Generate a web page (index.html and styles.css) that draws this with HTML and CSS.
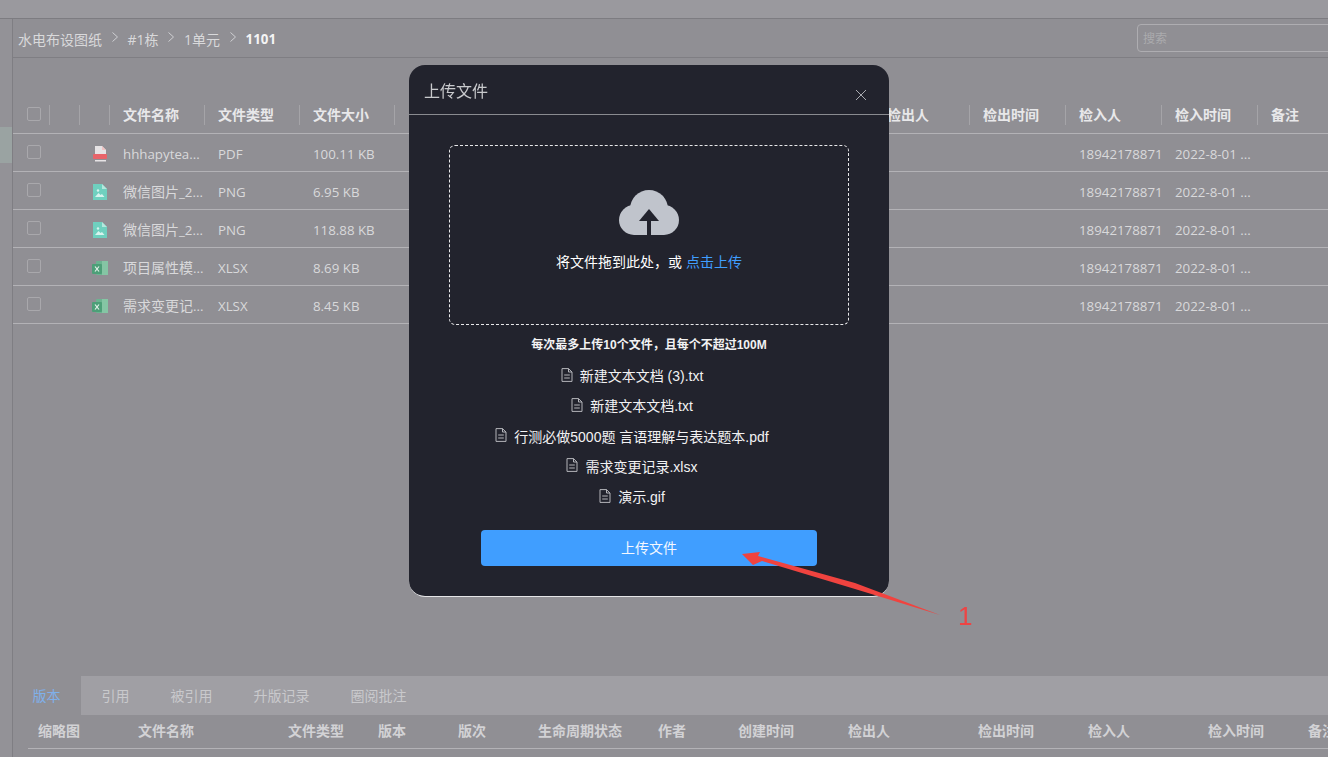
FILE: index.html
```html
<!DOCTYPE html>
<html lang="zh-CN">
<head>
  <meta charset="UTF-8">
  <meta name="viewport" content="width=device-width, initial-scale=1.0">
  <title>上传文件</title>
  <link rel="stylesheet" href="styles.css">
</head>
<body>
  <svg class="defs" width="0" height="0">
    <symbol id="ico-pdf" viewBox="0 0 16 16">
      <path d="M3 0h7l4 4v5H3z" fill="#e6e3e5"/>
      <path d="M10 0l4 4h-4z" fill="#f0c4c4"/>
      <rect x="1" y="8" width="14" height="5" rx="1" fill="#e8646a"/>
      <rect x="3" y="14" width="11" height="1.500" fill="#e6e3e5"/>
    </symbol>
    <symbol id="ico-png" viewBox="0 0 16 16">
      <path d="M1 0h9l5 5v11H1z" fill="#6fd0bf"/>
      <path d="M10 0l5 5h-5z" fill="#b4e8dd"/>
      <path d="M3 13l3.500-4 2 2 1.500-1 2.500 3z" fill="#d8f3ee"/>
      <circle cx="6" cy="6.500" r="1.200" fill="#d8f3ee"/>
    </symbol>
    <symbol id="ico-xls" viewBox="0 0 16 16">
      <rect x="4" y="1" width="12" height="14" rx="1" fill="#6cb391"/>
      <rect x="10" y="1" width="6" height="14" fill="#85c5a4"/>
      <rect x="0" y="4" width="10" height="10" rx="1" fill="#4d9f78"/>
      <path d="M3 6.500l4 5M7 6.500l-4 5" stroke="#e6f3ec" stroke-width="1.200"/>
    </symbol>
    <symbol id="ico-doc" viewBox="0 0 12 14">
      <path d="M1 .6h6.500L11 4v9.400H1zM7.500.6V4H11M3.200 7h5.600M3.200 10h5.600" fill="none" stroke="#b4b5ba" stroke-width="1"/>
    </symbol>
  </svg>

  <div class="page">
    <div class="topbar"></div>
    <div class="content">
      <div class="rail"><div class="rail-active"></div></div>
      <div class="main">
        <div class="crumbs">
          <div class="crumb-path">
            <span>水电布设图纸</span>
            <svg class="chev" viewBox="0 0 6 10"><path d="M.5.500L5.500 5 .5 9.500" fill="none" stroke="#cfcfd2"/></svg>
            <span>#1栋</span>
            <svg class="chev" viewBox="0 0 6 10"><path d="M.5.500L5.500 5 .5 9.500" fill="none" stroke="#cfcfd2"/></svg>
            <span>1单元</span>
            <svg class="chev" viewBox="0 0 6 10"><path d="M.5.500L5.500 5 .5 9.500" fill="none" stroke="#cfcfd2"/></svg>
            <span class="crumb-now">1101</span>
          </div>
          <input class="search" type="text" placeholder="搜索">
        </div>

        <div class="table">
          <div class="row head">
            <div class="cell"><span class="check"></span></div>
            <div class="cell line"></div>
            <div class="cell line"></div>
            <div class="cell line">文件名称</div>
            <div class="cell line">文件类型</div>
            <div class="cell line">文件大小</div>
            <div class="cell line"></div>
            <div class="cell line c-out">检出人</div>
            <div class="cell line">检出时间</div>
            <div class="cell line">检入人</div>
            <div class="cell line">检入时间</div>
            <div class="cell line">备注</div>
          </div>
          <div class="row">
            <div class="cell"><span class="check"></span></div>
            <div class="cell c-icon"><svg class="ftype"><use href="#ico-pdf"/></svg></div>
            <div class="cell lat">hhhapytea...</div>
            <div class="cell lat">PDF</div>
            <div class="cell lat">100.11 KB</div>
            <div class="cell lat c-user">18942178871</div>
            <div class="cell lat">2022-8-01 ...</div>
          </div>
          <div class="row">
            <div class="cell"><span class="check"></span></div>
            <div class="cell c-icon"><svg class="ftype"><use href="#ico-png"/></svg></div>
            <div class="cell cjk">微信图片<span class="lat">_2...</span></div>
            <div class="cell lat">PNG</div>
            <div class="cell lat">6.95 KB</div>
            <div class="cell lat c-user">18942178871</div>
            <div class="cell lat">2022-8-01 ...</div>
          </div>
          <div class="row">
            <div class="cell"><span class="check"></span></div>
            <div class="cell c-icon"><svg class="ftype"><use href="#ico-png"/></svg></div>
            <div class="cell cjk">微信图片<span class="lat">_2...</span></div>
            <div class="cell lat">PNG</div>
            <div class="cell lat">118.88 KB</div>
            <div class="cell lat c-user">18942178871</div>
            <div class="cell lat">2022-8-01 ...</div>
          </div>
          <div class="row">
            <div class="cell"><span class="check"></span></div>
            <div class="cell c-icon"><svg class="ftype"><use href="#ico-xls"/></svg></div>
            <div class="cell cjk">项目属性模<span class="lat">...</span></div>
            <div class="cell lat">XLSX</div>
            <div class="cell lat">8.69 KB</div>
            <div class="cell lat c-user">18942178871</div>
            <div class="cell lat">2022-8-01 ...</div>
          </div>
          <div class="row">
            <div class="cell"><span class="check"></span></div>
            <div class="cell c-icon"><svg class="ftype"><use href="#ico-xls"/></svg></div>
            <div class="cell cjk">需求变更记<span class="lat">...</span></div>
            <div class="cell lat">XLSX</div>
            <div class="cell lat">8.45 KB</div>
            <div class="cell lat c-user">18942178871</div>
            <div class="cell lat">2022-8-01 ...</div>
          </div>
        </div>

        <div class="tabs">
          <div class="tab tab-on">版本</div>
          <div class="tab">引用</div>
          <div class="tab">被引用</div>
          <div class="tab">升版记录</div>
          <div class="tab">圈阅批注</div>
        </div>
        <div class="sub-head">
          <div>缩略图</div>
          <div>文件名称</div>
          <div>文件类型</div>
          <div>版本</div>
          <div>版次</div>
          <div>生命周期状态</div>
          <div>作者</div>
          <div>创建时间</div>
          <div>检出人</div>
          <div>检出时间</div>
          <div>检入人</div>
          <div>检入时间</div>
          <div>备注</div>
        </div>
      </div>
    </div>
  </div>

  <div class="modal">
    <div class="modal-head">
      <span>上传文件</span>
      <svg class="close" viewBox="0 0 10 10"><path d="M0 0l10 10M10 0L0 10" stroke="#a9aab0" stroke-width="1"/></svg>
    </div>
    <div class="modal-body">
      <div class="drop">
        <svg class="cloud" viewBox="0 0 60 45">
          <circle cx="30" cy="19" r="19" fill="#c0c4cc"/>
          <circle cx="15" cy="30" r="15" fill="#c0c4cc"/>
          <circle cx="45" cy="30" r="15" fill="#c0c4cc"/>
          <rect x="15" y="25" width="30" height="20" fill="#c0c4cc"/>
          <path d="M30 19l10 12H20z" fill="#22232d"/>
          <rect x="28" y="30" width="4" height="15" fill="#22232d"/>
        </svg>
        <div class="drop-text">将文件拖到此处，或 <em>点击上传</em></div>
      </div>
      <div class="hint">每次最多上传10个文件，且每个不超过100M</div>
      <ul class="files">
        <li><svg class="doc"><use href="#ico-doc"/></svg>新建文本文档 (3).txt</li>
        <li><svg class="doc"><use href="#ico-doc"/></svg>新建文本文档.txt</li>
        <li><svg class="doc"><use href="#ico-doc"/></svg>行测必做5000题 言语理解与表达题本.pdf</li>
        <li><svg class="doc"><use href="#ico-doc"/></svg>需求变更记录.xlsx</li>
        <li><svg class="doc"><use href="#ico-doc"/></svg>演示.gif</li>
      </ul>
      <button class="submit" type="button">上传文件</button>
    </div>
  </div>

  <!-- 标注箭头 -->
  <svg class="mark-arrow" viewBox="0 0 210 70">
    <path d="M2 4L20 2 18 6 115 33 200 65 115 39 22 11 13 15z" fill="#f0433f"/>
  </svg>
  <div class="mark-num">1</div>
</body>
</html>
```

FILE: styles.css
```css
* {
  box-sizing: border-box;
}
html, body {
  margin: 0;
  height: 100%;
  overflow: hidden;
}
body {
  font-family: "Open Sans", "Noto Sans CJK SC", sans-serif;
  font-size: 14px;
  color: #d9d9db;
  background: #908f94;
}
.defs {
  position: absolute;
}
.page {
  display: flex;
  flex-direction: column;
  height: 757px;
}
.topbar {
  height: 19px;
  background: #9a999e;
  border-bottom: 1px solid #7d7c81;
}
.content {
  display: flex;
  flex: 1;
  min-height: 0;
}
.rail {
  width: 13px;
  padding-top: 108px;
  border-right: 1px solid #7f7e83;
  background: #939297;
}
.rail-active {
  height: 36px;
  background: #9aa3a2;
}
.main {
  display: flex;
  flex-direction: column;
  flex: 1;
  min-width: 0;
  overflow: hidden;
}

/* 面包屑 */
.crumbs {
  display: flex;
  align-items: center;
  height: 39px;
  flex-shrink: 0;
  border-bottom: 1px solid #7f7e83;
}
.crumb-path {
  display: flex;
  align-items: center;
  width: 1124px;
  flex-shrink: 0;
  padding: 2px 0 0 5px;
}
.chev {
  width: 6px;
  height: 10px;
  margin: -5px 10px 0 9.5px;
}
.crumb-now {
  font-size: 13.3px;
  font-weight: 700;
  color: #f4f4f5;
}
.search {
  width: 240px;
  height: 28px;
  flex-shrink: 0;
  padding: 0 5px 2px;
  font: 12px "Noto Sans CJK SC", sans-serif;
  background: transparent;
  border: 1px solid #aeadb1;
  border-radius: 4px;
}
.search::placeholder {
  color: #ababae;
}

/* 文件表格 */
.table {
  margin-top: 38px;
  height: 580px;
  flex-shrink: 0;
}
.row {
  display: grid;
  grid-template-columns: 36px 30px 30px 95px 95px 95px 96px 96px 96px 96px 95px 96px 96px 96px 96px 71px;
  align-items: center;
  height: 38px;
  border-bottom: 1px solid #b3b2b6;
}
.cell {
  padding-left: 14px;
  padding-top: 2px;
  white-space: nowrap;
}
.lat {
  font-size: 13.3px;
}
.cell.cjk {
  padding-top: 0;
}
.row > .cell:first-child {
  padding-left: 14px;
  padding-top: 0;
  display: flex;
  margin-top: -1px;
}
.head .cell {
  padding-top: 0;
  font-weight: 700;
  color: #e8e8ea;
}
.line {
  height: 20px;
  line-height: 20px;
  padding-left: 13px;
  border-left: 1px solid #a5a4a8;
}
.head .c-out {
  grid-column: 12;
}
.c-icon {
  grid-column: 3;
  padding: 0;
  height: 16px;
  margin-top: 3px;
}
.c-icon .ftype {
  display: block;
  margin-left: 13px;
  width: 16px;
  height: 16px;
}
.c-user {
  grid-column: 14;
}
.check {
  display: block;
  width: 14px;
  height: 14px;
  border: 1px solid #a9a8ac;
  border-radius: 2px;
}

/* 底部页签 */
.tabs {
  display: flex;
  height: 39px;
  flex-shrink: 0;
  background: #a09fa4;
  color: #c9c9cc;
}
.tab {
  padding: 0 20.5px;
  line-height: 39px;
}
.tab-on {
  width: 68px;
  padding: 0 18px 0 19.5px;
  background: #908f94;
  color: #7fb0ea;
}
.sub-head {
  display: grid;
  grid-template-columns: 100px 150px 90px 80px 80px 120px 80px 110px 130px 110px 120px 100px 100px;
  align-items: center;
  height: 34px;
  margin-left: 15px;
  padding: 0 0 4px 10px;
  flex-shrink: 0;
  font-weight: 700;
  color: #d2d2d5;
  border-bottom: 1px solid #b3b2b6;
  white-space: nowrap;
}

/* 上传弹窗 */
.modal {
  position: fixed;
  left: 409px;
  top: 65px;
  width: 480px;
  height: 532px;
  font-family: "Liberation Sans", "Noto Sans CJK SC", sans-serif;
  color: #f2f2f3;
  background: #22232d;
  border-bottom: 1px solid #e5e5e7;
  border-radius: 16px;
}
.modal-head {
  position: relative;
  height: 50px;
  padding: 16px 15px 0;
  font-size: 16px;
  line-height: 22px;
  color: #c8c9cc;
  border-bottom: 1px solid #8a8b90;
}
.close {
  position: absolute;
  right: 23px;
  top: 25px;
  width: 10px;
  height: 10px;
}
.modal-body {
  display: flex;
  flex-direction: column;
  align-items: center;
  padding-top: 30px;
}
.drop {
  display: flex;
  flex-direction: column;
  align-items: center;
  width: 400px;
  height: 180px;
  padding-top: 44px;
  border: 1px dashed #e8e8ea;
  border-radius: 6px;
}
.cloud {
  width: 60px;
  height: 45px;
}
.drop-text {
  margin-top: 17px;
  line-height: 20px;
  color: #fff;
}
.drop-text em {
  font-style: normal;
  color: #409eff;
}
.hint {
  margin-top: 10px;
  font-size: 12px;
  line-height: 20px;
  font-weight: 700;
  color: #f2f2f3;
}
.files {
  list-style: none;
  margin: 5px 34px 0 0;
  padding: 0;
}
.files li {
  display: flex;
  align-items: center;
  justify-content: center;
  height: 30.25px;
}
.doc {
  width: 12px;
  height: 14px;
  margin-right: 7px;
  margin-top: -1px;
}
.submit {
  width: 336px;
  height: 36px;
  margin-top: 19px;
  padding: 0 0 2px;
  font: inherit;
  color: #f4f8ff;
  background: #409eff;
  border: none;
  border-radius: 4px;
}

/* 标注 */
.mark-arrow {
  position: fixed;
  left: 740px;
  top: 550px;
  width: 210px;
  height: 70px;
}
.mark-num {
  position: fixed;
  left: 958px;
  top: 600px;
  font: 26px/32px "Liberation Sans", sans-serif;
  color: #ee4444;
}
```
